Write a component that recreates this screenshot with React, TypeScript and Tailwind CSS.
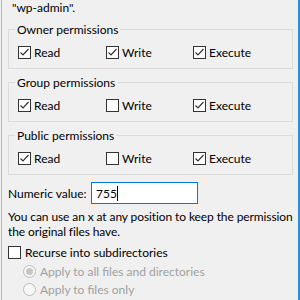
import React from "react";

function Check({ checked }: { checked: boolean }) {
  return (
    <span className="w-[13px] h-[13px] border border-[#333333] bg-white flex items-center justify-center shrink-0">
      {checked && (
        <svg width="11" height="11" viewBox="0 0 11 11">
          <polyline points="1.5,5.5 4,8 9.5,2" fill="none" stroke="#333333" strokeWidth="1.2" />
        </svg>
      )}
    </span>
  );
}

function Item({ label, checked, w }: { label: string; checked: boolean; w: string }) {
  return (
    <div className={`flex items-center gap-[3px] h-[13px] ${w}`}>
      <Check checked={checked} />
      <span className="leading-[15px] whitespace-nowrap">{label}</span>
    </div>
  );
}

function Group({ title, r, w, x }: { title: string; r: boolean; w: boolean; x: boolean }) {
  return (
    <fieldset className="border border-[#dcdcdc] pl-[9px] pr-2 pt-[9px] pb-[9px]">
      <legend className="px-[2px] ml-[-3px] leading-[15px] h-[15px]">{title}</legend>
      <div className="flex">
        <Item label="Read" checked={r} w="w-[88px]" />
        <Item label="Write" checked={w} w="w-[87px]" />
        <Item label="Execute" checked={x} w="w-[90px]" />
      </div>
    </fieldset>
  );
}

function Radio({ label, selected }: { label: string; selected: boolean }) {
  return (
    <div className="flex items-center gap-[4px] h-[18px] pl-[15px]">
      <span className="w-[13px] h-[13px] rounded-full border border-[#bcbcbc] bg-[#f7f7f7] flex items-center justify-center shrink-0">
        {selected && <span className="w-[7px] h-[7px] rounded-full bg-[#c6c6c6]" />}
      </span>
      <span className="text-[#a0a0a0] leading-[15px] whitespace-nowrap">{label}</span>
    </div>
  );
}

export default function App() {
  return (
    <div
      className="w-[300px] h-[300px] bg-[#f0f0f0] relative overflow-hidden text-[12px] text-black"
      style={{ fontFamily: 'Lato, "Noto Sans", sans-serif' }}
    >
      <div className="absolute left-[1px] top-0 bottom-0 w-px bg-[#8fc0ef]" />
      <div className="absolute right-0 top-0 bottom-0 w-[2px] bg-[#2b8be0]" />
      <div className="pl-[8px] pr-[7px] flex flex-col">
        <div className="leading-[15px] h-[16px] pl-[4px]">"wp-admin".</div>
        <div className="flex flex-col gap-[6px] mt-[6px]">
          <Group title="Owner permissions" r w x />
          <Group title="Group permissions" r w={false} x />
          <Group title="Public permissions" r w={false} x />
        </div>
        <div className="flex items-center mt-[7px] h-[22px]">
          <span className="w-[83px] leading-[15px] whitespace-nowrap">Numeric value:</span>
          <div className="w-[107px] h-[22px] border border-[#0078d7] bg-white flex items-center pl-[4px]">
            <span className="leading-[15px]">755</span>
            <span className="w-px h-[15px] bg-black" />
          </div>
        </div>
        <div className="mt-[5px] leading-[15px] whitespace-nowrap tracking-[-0.1px]">
          You can use an x at any position to keep the permission
          <br />
          the original files have.
        </div>
        <div className="mt-[6px] flex items-center gap-[4px] h-[15px]">
          <Check checked={false} />
          <span className="leading-[15px] whitespace-nowrap">Recurse into subdirectories</span>
        </div>
        <div className="mt-[2px] flex flex-col">
          <Radio label="Apply to all files and directories" selected />
          <Radio label="Apply to files only" selected={false} />
        </div>
      </div>
    </div>
  );
}
